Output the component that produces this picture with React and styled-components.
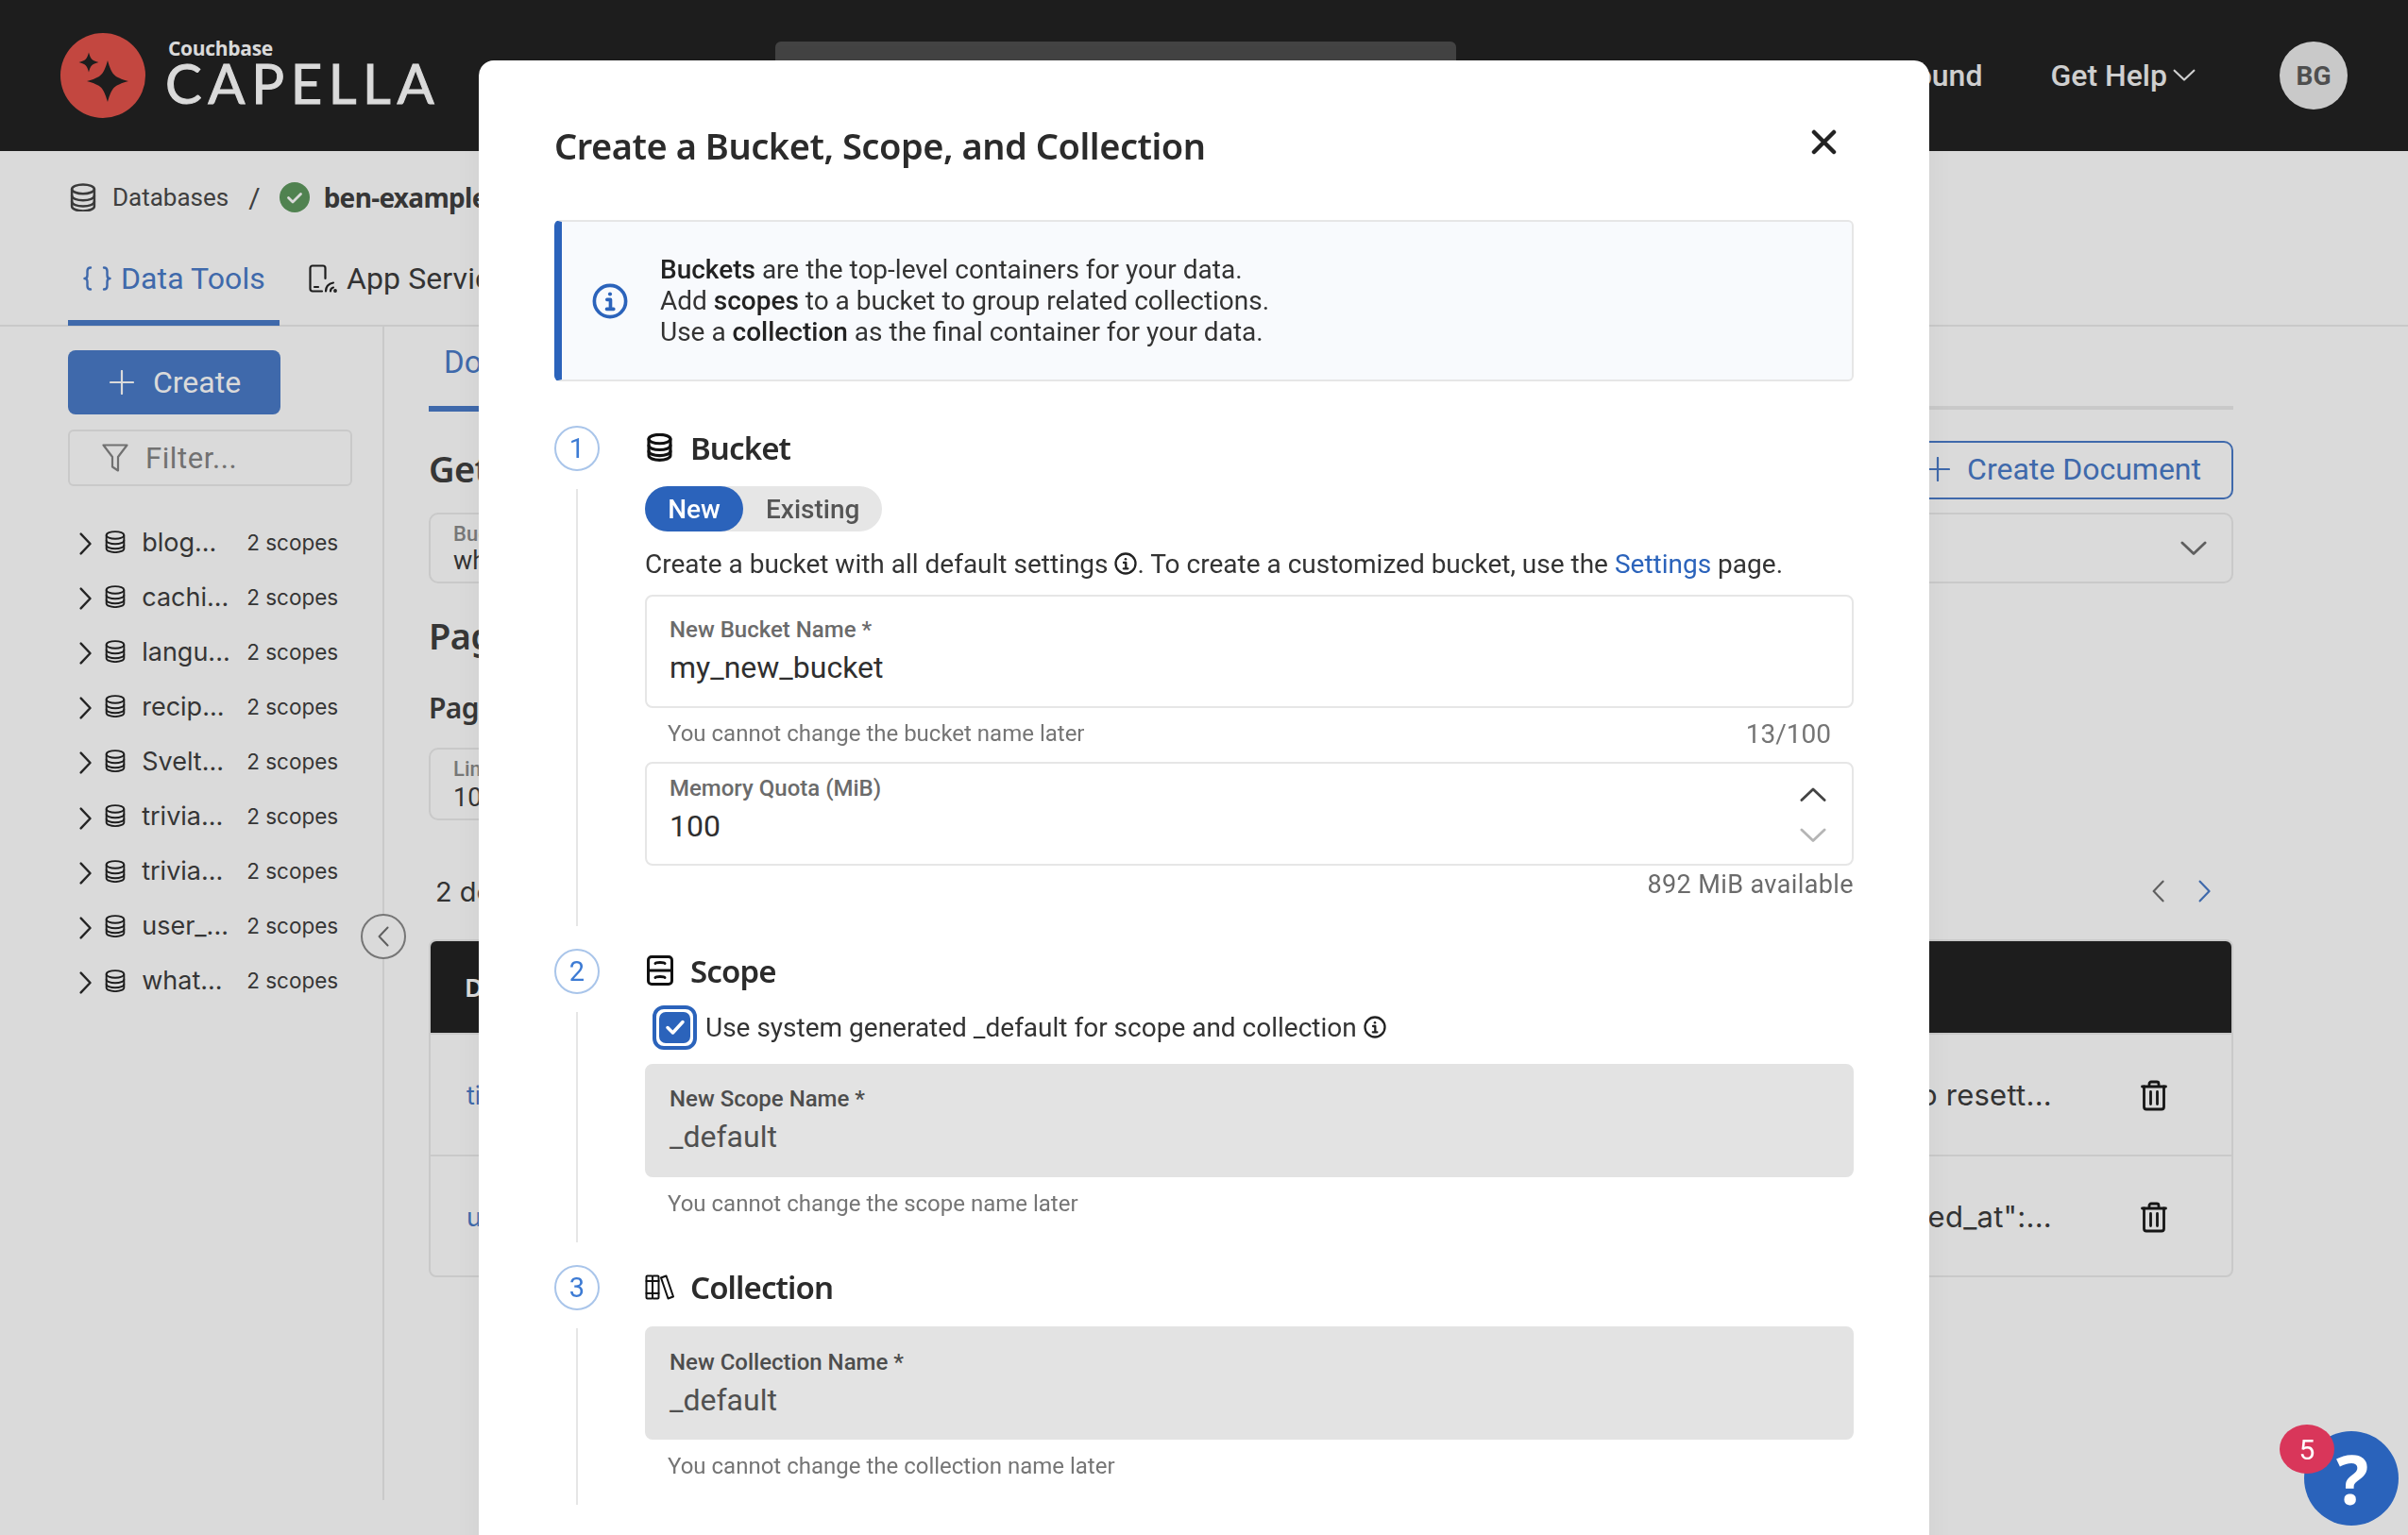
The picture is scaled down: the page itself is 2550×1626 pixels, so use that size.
import React from "react";
import styled, { createGlobalStyle } from "styled-components";

const Global = createGlobalStyle`
  html, body { margin: 0; padding: 0; width: 2550px; height: 1626px; overflow: hidden; background: #fff; }
  * { box-sizing: border-box; }
  body { font-family: Roboto, "Liberation Sans", sans-serif; color: #3c3c3c; }
`;

const Page = styled.div`width: 2550px; height: 1626px; display: flex; flex-direction: column; overflow: hidden;`;
const Header = styled.header`height: 160px; background: #232323; display: flex; align-items: center; padding: 0 64px 0 64px; flex: none;`;
const LogoWrap = styled.div`display: flex; align-items: center; gap: 21px; width: 396px; flex: none;`;
const LogoText = styled.div`display: flex; flex-direction: column; margin-top: -10px;`;
const LogoSmall = styled.span`font: 700 21px/22px "Open Sans", sans-serif; color: #fff; margin-left: 3px; letter-spacing: -.3px;`;
const LogoBig = styled.span`font: 400 58px/44px Lato, sans-serif; color: #fff; letter-spacing: 6.600px; margin-top: 4px; -webkit-text-stroke: 1px #fff; white-space: nowrap;`;
const Search = styled.div`width: 721px; height: 72px; margin-left: 361px; background: #4f4f4f; border-radius: 6px; flex: none;`;
const Nav = styled.nav`margin-left: auto; display: flex; align-items: center; color: #f2f2f2; font-size: 32px; font-weight: 500;`;
const NavItem = styled.span`display: flex; align-items: center; gap: 6px; margin-right: ${p => p.$mr}px;`;
const Avatar = styled.div`width: 72px; height: 72px; border-radius: 50%; background: #ebebeb; color: #5c5c5c; font: 700 28px Roboto, sans-serif; display: flex; align-items: center; justify-content: center;`;

const Crumbs = styled.div`height: 100px; flex: none; display: flex; align-items: center; padding: 0 0 2px 74px; font-size: 26px; color: #4a4a4a;`;
const CrumbLabel = styled.span`margin-left: 17px;`;
const Slash = styled.span`margin: 0 20px 0 21px; font-size: 30px;`;
const CrumbBold = styled.span`margin-left: 15px; font: 700 28px "Noto Sans", sans-serif; color: #404040; letter-spacing: -.7px; white-space: nowrap;`;
const Tabs = styled.div`height: 86px; flex: none; display: flex; padding-left: 72px; border-bottom: 2px solid #ebebeb;`;
const Tab = styled.div`height: 85px; width: ${p => p.$w}px; padding: 0 0 ${p => p.$on ? 10 : 16}px 16px; display: flex; align-items: center; gap: ${p => p.$gap}px; font-size: 32px; letter-spacing: .1px; color: ${p => p.$on ? "#4a7bc8" : "#3c3c3c"}; border-bottom: ${p => p.$on ? "6px solid #4a7bc8" : "0"}; margin-right: ${p => p.$mr || 0}px;`;

const Body = styled.div`display: flex; flex: 1; min-height: 0;`;
const Sidebar = styled.aside`position: relative; width: 407px; height: 1243px; flex: none; border-right: 2px solid #ebebeb; padding: 25px 0 0 72px;`;
const CreateBtn = styled.div`width: 225px; height: 68px; background: #4a7bc8; border-radius: 8px; display: flex; align-items: center; justify-content: center; gap: 20px; color: #fff; font-size: 32px; padding-left: 2px;`;
const FilterBox = styled.div`width: 301px; height: 60px; margin-top: 16px; border: 2px solid #ebebeb; border-radius: 6px; display: flex; align-items: center; padding-left: 34px; gap: 18px; color: #858585; font-size: 31px; letter-spacing: .6px;`;
const Tree = styled.div`margin-top: 30px; padding-left: 12px;`;
const TreeRow = styled.div`height: 58.1px; display: flex; align-items: center; color: #3f3f3f; font: 400 27px Inter, sans-serif;`;
const TreeName = styled.span`margin-left: 17px; width: 111px; flex: none;`;
const TreeMeta = styled.span`font-size: 22.500px;`;
const Chev = styled.span`display: inline-flex; margin-right: 14px; margin-top: 4px;`;
const Collapse = styled.div`position: absolute; top: 622px; right: -25px; width: 48px; height: 48px; border-radius: 50%; border: 2px solid #8a8a8a; background: #fff; display: flex; align-items: center; justify-content: center;`;

const Main = styled.main`flex: 1; padding: 0 185px 0 47px; min-width: 0;`;
const SubTabs = styled.div`height: 88px; border-bottom: 4px solid #ebebeb; display: flex;`;
const SubTab = styled.div`width: 300px; height: 90px; padding: 0 0 10px 16px; display: flex; align-items: center; color: #4a7bc8; font-size: 33px; border-bottom: 6px solid #4a7bc8;`;
const TopRow = styled.div`margin-top: 33px; height: 62px; display: flex; justify-content: space-between; align-items: center;`;
const H2 = styled.h2`margin: 0 0 4px; font: 600 38px "Noto Sans", sans-serif; color: #404040; letter-spacing: -.6px;`;
const OutlineBtn = styled.div`width: 344px; height: 62px; border: 2px solid #4a7bc8; border-radius: 10px; display: flex; align-items: center; justify-content: flex-end; gap: 18px; padding: 0 32px 2px 0; color: #4a7bc8; font-size: 32px;`;
const SelectBox = styled.div`position: relative; height: ${p => p.$h}px; width: ${p => p.$w || "100%"}; margin-top: ${p => p.$mt}px; border: 2px solid #ebebeb; border-radius: 10px; padding: 8px 0 0 24px; display: flex; flex-direction: column; justify-content: space-between;`;
const SelLabel = styled.span`font: 500 22px Roboto, sans-serif; color: #8c8c8c;`;
const SelValue = styled.span`font-size: 27px; color: #3c3c3c; padding-bottom: 6px;`;
const SelChev = styled.span`position: absolute; right: 26px; top: 28px; display: flex;`;
const H3 = styled.h3`margin: ${p => p.$mt}px 0 0; font: 600 ${p => p.$s}px "Noto Sans", sans-serif; color: #404040; letter-spacing: -.6px;`;
const CountRow = styled.div`margin-top: 53px; padding-left: 7px; display: flex; justify-content: space-between; align-items: center; height: 44px; font: 400 29px Inter, sans-serif; color: #3c3c3c;`;
const Pager = styled.div`display: flex; gap: 36px; padding-right: 24px;`;
const DocTable = styled.div`margin-top: 29px; border: 2px solid #ebebeb; border-radius: 8px; overflow: hidden;`;
const THead = styled.div`height: 97px; background: #232323; color: #fff; font: 600 27px "Noto Sans", sans-serif; display: flex; align-items: center; padding-left: 36px;`;
const TRow = styled.div`height: ${p => p.$h}px; display: flex; align-items: center; padding: 2px 68px 0 38px; border-top: 2px solid #ebebeb;`;
const TId = styled.span`color: #4a7bc8; font: 400 27px Inter, sans-serif;`;
const TValue = styled.span`margin-left: auto; font: 400 31px Inter, sans-serif; color: #3c3c3c; letter-spacing: .25px; white-space: nowrap; margin-bottom: 2px;`;
const TrashWrap = styled.span`margin-left: 94px; display: flex;`;

const Overlay = styled.div`position: fixed; inset: 0; background: rgba(0,0,0,.145); display: flex; justify-content: center; padding-top: 64px;`;
const Modal = styled.section`width: 1536px; height: 1700px; background: #fff; border-radius: 16px 16px 0 0; padding: 0 80px; box-shadow: 0 0 40px rgba(0,0,0,.05); flex: none; position: relative;`;
const TitleRow = styled.div`height: 169px; padding-top: 59px; display: flex; justify-content: space-between; align-items: flex-start;`;
const Title = styled.h1`margin: 0; font: 600 38px/62px "Noto Sans", sans-serif; color: #2b2b2b; letter-spacing: -.47px;`;
const CloseBtn = styled.span`display: flex; margin: 14px 18px 0 0;`;
const InfoBox = styled.div`height: 171px; background: #f8fafd; border: 2px solid #e6e6e6; border-left: 8px solid #2b63bb; border-radius: 6px; display: flex; align-items: center; padding-left: 32px; gap: 34px; font-size: 28px; line-height: 33px; color: #333;`;
const B = styled.b`font-weight: 500; color: #222;`;
const Steps = styled.div`margin-top: 47px; display: flex; flex-direction: column; gap: 24px;`;
const Step = styled.div`display: grid; grid-template-columns: 48px 1fr; column-gap: 48px; padding-bottom: ${p => p.$pb}px;`;
const Rail = styled.div`display: flex; flex-direction: column; align-items: center; margin-bottom: -${p => p.$pb}px;`;
const Circle = styled.div`width: 48px; height: 48px; border-radius: 50%; border: 2px solid #a9c5ea; color: #3d7bd4; font-size: 29px; display: flex; align-items: center; justify-content: center; flex: none;`;
const RailLine = styled.div`flex: 1; width: 2px; background: #e6e6e6; margin-top: 19px;`;
const StepBody = styled.div`display: flex; flex-direction: column; min-width: 0;`;
const StepHead = styled.div`height: 48px; display: flex; align-items: center; gap: ${p => p.$gap}px; font: 600 33px "Noto Sans", sans-serif; color: #2b2b2b; letter-spacing: -.9px; padding: 0 0 2px ${p => p.$pl || 0}px;`;
const Toggle = styled.div`margin-top: 16px; width: 251px; height: 48px; background: #e6e6e6; border-radius: 24px; display: flex; align-items: center; font-size: 28px; font-weight: 500;`;
const ToggleOn = styled.span`width: 104px; height: 48px; border-radius: 24px; background: #2b63bb; color: #fff; display: flex; align-items: center; justify-content: center;`;
const ToggleOff = styled.span`margin-left: 24px; color: #555;`;
const Desc = styled.div`margin-top: 16px; height: 36px; display: flex; align-items: center; white-space: pre; font-size: 28px; color: #333;`;
const A = styled.span`color: #2b63bb;`;
const Field = styled.div`position: relative; margin-top: ${p => p.$mt}px; height: ${p => p.$h}px; border-radius: 8px; padding: ${p => p.$pt}px 24px 0 24px; background: ${p => p.$off ? "#e3e3e3" : "#fff"}; border: 2px solid ${p => p.$off ? "#e3e3e3" : "#e6e6e6"}; display: flex; flex-direction: column;`;
const FieldLabel = styled.label`font: 500 24px/28px Roboto, sans-serif; color: ${p => p.$off ? "#4d4d4d" : "#6b6b6b"};`;
const FieldValue = styled.div`font-size: 32px; line-height: 40px; margin-top: 6px; color: ${p => p.$off ? "#505050" : "#2f2f2f"};`;
const Spin = styled.div`position: absolute; right: 27px; top: 25px; display: flex; flex-direction: column; gap: 28px;`;
const Helper = styled.div`margin-top: ${p => p.$mt}px; height: 30px; padding: 0 24px; display: flex; justify-content: space-between; align-items: center; font-size: 24px; color: #757575;`;
const Count = styled.span`font-size: 28px;`;
const Avail = styled.div`margin-top: 5px; height: 30px; text-align: right; font-size: 27px; line-height: 30px; color: #6b6b6b; letter-spacing: .4px;`;
const CheckRow = styled.div`margin-top: 11px; height: 48px; display: flex; align-items: center; font-size: 28px; color: #333; padding-left: 8px; white-space: pre;`;
const CheckRing = styled.span`width: 47px; height: 47px; border: 4px solid #2b63bb; border-radius: 12px; padding: 3px; margin-right: 9px; display: flex; flex: none;`;
const CheckBox = styled.span`flex: 1; background: #2b63bb; border-radius: 7px; display: flex; align-items: center; justify-content: center;`;

const Fab = styled.div`position: fixed; left: 2440px; top: 1516px; width: 100px; height: 100px; border-radius: 50%; background: #2a63bb; color: #fff; font: 700 72px "Noto Sans", sans-serif; display: flex; align-items: center; justify-content: center; padding: 0 0 0 2px;`;
const Badge = styled.div`position: absolute; left: -26px; top: -7px; width: 58px; height: 52px; border-radius: 50%; background: #d9365a; color: #fff; font: 400 30px Roboto, sans-serif; display: flex; align-items: center; justify-content: center;`;

const Ico = ({ w, h = w, vb, color = "currentColor", sw = 2, children }) => (
  <svg width={w} height={h} viewBox={vb} fill="none" stroke={color} strokeWidth={sw} strokeLinecap="round" strokeLinejoin="round" style={{ flex: "none", display: "block" }}>{children}</svg>
);
const Db = ({ w, color = "#2b2b2b", sw = 2 }) => (
  <Ico w={w} h={w * 1.1} vb="0 0 20 22" color={color} sw={sw}>
    <ellipse cx="10" cy="4.5" rx="8.5" ry="3.5" />
    <path d="M1.5 4.5v13c0 2 3.8 3.5 8.5 3.5s8.5-1.500 8.500-3.500v-13" />
    <path d="M1.500 9.500c0 2 3.800 3.500 8.500 3.500s8.500-1.500 8.500-3.500" />
    <path d="M1.500 14c0 2 3.800 3.500 8.500 3.500s8.500-1.500 8.500-3.500" />
  </Ico>
);
const ScopeIco = () => (
  <Ico w={28} h={32} vb="0 0 28 32" color="#111" sw={3}>
    <rect x="1.500" y="1.500" width="25" height="29" rx="3.500" />
    <path d="M1.500 16h25" />
    <path d="M9 8.500c1-1.500 9-1.500 10 0" />
    <path d="M9 23.500c1-1.500 9-1.500 10 0" />
  </Ico>
);
const BooksIco = () => (
  <Ico w={31} h={27} vb="0 0 31 27" color="#111" sw={2}>
    <rect x="1.500" y="1.500" width="6.500" height="24" rx="1" />
    <rect x="8" y="1.500" width="6.500" height="24" rx="1" />
    <path d="M1.500 7h13M1.500 20h13" />
    <path d="M17 3.500l5.500-2 7.500 22-5.500 2z" />
  </Ico>
);
const InfoIco = ({ s, color }) => (
  <Ico w={s} vb="0 0 24 24" color={color} sw={2.300}>
    <circle cx="12" cy="12" r="10.500" />
    <circle cx="12" cy="7.300" r="1.300" fill={color} stroke="none" />
    <path d="M10 11h2.300v6M9.800 17.300h4.600" />
  </Ico>
);
const ChevD = ({ w = 24, color = "#f2f2f2", sw = 2 }) => (
  <Ico w={w} h={w * .55} vb="0 0 22 12" color={color} sw={sw}><path d="M1.500 1.500L11 10.500 20.500 1.500" /></Ico>
);
const ChevU = ({ w = 24, color, sw = 2 }) => (
  <Ico w={w} h={w * .55} vb="0 0 22 12" color={color} sw={sw}><path d="M1.500 10.500L11 1.500 20.500 10.500" /></Ico>
);
const ChevR = ({ h = 22, color = "#2b2b2b", sw = 2 }) => (
  <Ico w={h * .55} h={h} vb="0 0 12 22" color={color} sw={sw}><path d="M1.500 1.500L10.500 11 1.500 20.500" /></Ico>
);
const ChevL = ({ h = 22, color = "#2b2b2b", sw = 2 }) => (
  <Ico w={h * .55} h={h} vb="0 0 12 22" color={color} sw={sw}><path d="M10.500 1.500L1.500 11 10.500 20.500" /></Ico>
);
const Plus = ({ s, color }) => (
  <Ico w={s} vb="0 0 26 26" color={color} sw={2.200}><path d="M13 1v24M1 13h24" /></Ico>
);
const Trash = () => (
  <Ico w={28} h={33} vb="0 0 28 32" color="#1a1a1a" sw={2.800}>
    <path d="M1.500 6.500h25M9 6.500V3.500c0-1 .8-2 2-2h6c1.200 0 2 1 2 2v3" />
    <path d="M3.500 6.500V28c0 1.500 1 2.500 2.500 2.500h16c1.500 0 2.500-1 2.500-2.500V6.500" />
    <path d="M10.500 12v13M17.500 12v13" />
  </Ico>
);
const Star = ({ cx, cy, r }) => (
  <path fill="#232323" d={`M${cx} ${cy - r}C${cx + r * .2} ${cy - r * .3} ${cx + r * .3} ${cy - r * .2} ${cx + r} ${cy}C${cx + r * .3} ${cy + r * .2} ${cx + r * .2} ${cy + r * .3} ${cx} ${cy + r}C${cx - r * .2} ${cy + r * .3} ${cx - r * .3} ${cy + r * .2} ${cx - r} ${cy}C${cx - r * .3} ${cy - r * .2} ${cx - r * .2} ${cy - r * .3} ${cx} ${cy - r}Z`} />
);

const buckets = ["blog...", "cachi...", "langu...", "recip...", "Svelt...", "trivia...", "trivia...", "user_...", "what..."];

export default function App() {
  return (
    <Page>
      <Global />
      <Header>
        <LogoWrap>
          <svg width="90" height="90" viewBox="0 0 90 90" style={{ flex: "none" }}>
            <circle cx="45" cy="45" r="45" fill="#e5544b" />
            <Star cx={50} cy={51} r={22} />
            <Star cx={30} cy={31} r={10.5} />
          </svg>
          <LogoText>
            <LogoSmall>Couchbase</LogoSmall>
            <LogoBig>CAPELLA</LogoBig>
          </LogoText>
        </LogoWrap>
        <Search />
        <Nav>
          <NavItem $mr={72}>Playground</NavItem>
          <NavItem $mr={89}>Get Help <ChevD w={24} /></NavItem>
          <Avatar>BG</Avatar>
        </Nav>
      </Header>
      <Crumbs>
        <Db w={28} color="#444" sw={1.800} />
        <CrumbLabel>Databases</CrumbLabel>
        <Slash>/</Slash>
        <svg width="32" height="32" viewBox="0 0 32 32" style={{ flex: "none" }}>
          <circle cx="16" cy="16" r="16" fill="#5e985e" />
          <path d="M9.500 16.500l4.500 4.500 8.500-8.500" fill="none" stroke="#fff" strokeWidth="2.800" strokeLinecap="round" strokeLinejoin="round" />
        </svg>
        <CrumbBold>ben-example-cluster</CrumbBold>
      </Crumbs>
      <Tabs>
        <Tab $on $w={224} $gap={10} $mr={15}>
          <Ico w={30} h={26} vb="0 0 30 26" sw={2.400}>
            <path d="M8 1.500C5 1.500 4.500 3 4.500 5v4.500c0 2-1 3.500-3 3.500 2 0 3 1.500 3 3.500V21c0 2 .5 3.500 3.500 3.500" />
            <path d="M22 1.500c3 0 3.500 1.500 3.500 3.500v4.500c0 2 1 3.500 3 3.500-2 0-3 1.500-3 3.500V21c0 2-.5 3.500-3.500 3.500" />
          </Ico>
          Data Tools
        </Tab>
        <Tab $w={380} $gap={10}>
          <Ico w={30} h={30} vb="0 0 30 30" color="#222" sw={2.200}>
            <path d="M14 28.500H4c-1.500 0-2.500-1-2.500-2.500V4C1.500 2.500 2.500 1.500 4 1.500h11c1.500 0 2.500 1 2.500 2.500v11" />
            <path d="M6 24h4" />
            <path d="M18 28.500c0-5 3-8 8-9M23 28.500c0-2 1-3.500 3-4" />
            <circle cx="28" cy="28" r=".8" />
          </Ico>
          App Services
        </Tab>
      </Tabs>
      <Body>
        <Sidebar>
          <CreateBtn><Plus s={26} color="#fff" />Create</CreateBtn>
          <FilterBox>
            <Ico w={28} h={30} vb="0 0 28 30" color="#858585" sw={2.200}>
              <path d="M1.500 1.500h25L17 14v14.500l-6-4V14z" />
            </Ico>
            Filter...
          </FilterBox>
          <Tree>
            {buckets.map((n, i) => (
              <TreeRow key={i}>
                <Chev><ChevR h={24} sw={2.200} /></Chev>
                <Db w={22} color="#222" sw={1.700} />
                <TreeName>{n}</TreeName>
                <TreeMeta>2 scopes</TreeMeta>
              </TreeRow>
            ))}
          </Tree>
          <Collapse><ChevL h={22} color="#707070" /></Collapse>
        </Sidebar>
        <Main>
          <SubTabs><SubTab>Documents</SubTab></SubTabs>
          <TopRow>
            <H2>Get Documents</H2>
            <OutlineBtn><Plus s={26} color="#4a7bc8" />Create Document</OutlineBtn>
          </TopRow>
          <SelectBox $h={75} $mt={14}>
            <SelLabel>Bucket</SelLabel>
            <SelValue>what-if</SelValue>
            <SelChev><ChevD w={28} color="#707070" sw={2.200} /></SelChev>
          </SelectBox>
          <H3 $mt={29} $s={38}>Page Options</H3>
          <H3 $mt={30} $s={30}>Page</H3>
          <SelectBox $h={77} $mt={22} $w="300px">
            <SelLabel>Limit</SelLabel>
            <SelValue>10</SelValue>
          </SelectBox>
          <CountRow>
            2 documents
            <Pager>
              <ChevL h={24} color="#707070" />
              <ChevR h={24} color="#4a7bc8" />
            </Pager>
          </CountRow>
          <DocTable>
            <THead>Document ID</THead>
            <TRow $h={129}>
              <TId>ticket</TId>
              <TValue>o resett...</TValue>
              <TrashWrap><Trash /></TrashWrap>
            </TRow>
            <TRow $h={128}>
              <TId>user</TId>
              <TValue>ed_at":...</TValue>
              <TrashWrap><Trash /></TrashWrap>
            </TRow>
          </DocTable>
        </Main>
      </Body>

      <Overlay>
        <Modal>
          <TitleRow>
            <Title>Create a Bucket, Scope, and Collection</Title>
            <CloseBtn>
              <Ico w={27} vb="0 0 27 27" color="#222" sw={4.500}><path d="M3 3l21 21M24 3L3 24" /></Ico>
            </CloseBtn>
          </TitleRow>
          <InfoBox>
            <InfoIco s={38} color="#2b63bb" />
            <div>
              <B>Buckets</B> are the top-level containers for your data.<br />
              Add <B>scopes</B> to a bucket to group related collections.<br />
              Use a <B>collection</B> as the final container for your data.
            </div>
          </InfoBox>
          <Steps>
            <Step $pb={29}>
              <Rail $pb={29}><Circle>1</Circle><RailLine /></Rail>
              <StepBody>
                <StepHead $gap={19} $pl={2}><Db w={27} color="#111" sw={2.300} />Bucket</StepHead>
                <Toggle><ToggleOn>New</ToggleOn><ToggleOff>Existing</ToggleOff></Toggle>
                <Desc>Create a bucket with all default settings <InfoIco s={24} color="#222" />. To create a customized bucket, use the <A>Settings</A> page.</Desc>
                <Field $mt={15} $h={120} $pt={21}>
                  <FieldLabel>New Bucket Name *</FieldLabel>
                  <FieldValue>my_new_bucket</FieldValue>
                </Field>
                <Helper $mt={12}>You cannot change the bucket name later<Count>13/100</Count></Helper>
                <Field $mt={15} $h={110} $pt={12}>
                  <FieldLabel>Memory Quota (MiB)</FieldLabel>
                  <FieldValue>100</FieldValue>
                  <Spin>
                    <ChevU w={28} color="#444" sw={2.200} />
                    <ChevD w={28} color="#b5b5b5" sw={2.200} />
                  </Spin>
                </Field>
                <Avail>892 MiB available</Avail>
              </StepBody>
            </Step>
            <Step $pb={26}>
              <Rail $pb={26}><Circle>2</Circle><RailLine /></Rail>
              <StepBody>
                <StepHead $gap={18} $pl={2}><ScopeIco />Scope</StepHead>
                <CheckRow>
                  <CheckRing>
                    <CheckBox>
                      <Ico w={22} h={18} vb="0 0 22 18" color="#fff" sw={3.500}><path d="M3 9.500l5.500 5.500L19 3.500" /></Ico>
                    </CheckBox>
                  </CheckRing>
                  Use system generated _default for scope and collection <InfoIco s={24} color="#222" />
                </CheckRow>
                <Field $off $mt={15} $h={120} $pt={21}>
                  <FieldLabel $off>New Scope Name *</FieldLabel>
                  <FieldValue $off>_default</FieldValue>
                </Field>
                <Helper $mt={13}>You cannot change the scope name later</Helper>
              </StepBody>
            </Step>
            <Step $pb={26}>
              <Rail $pb={26}><Circle>3</Circle><RailLine /></Rail>
              <StepBody>
                <StepHead $gap={17}><BooksIco />Collection</StepHead>
                <Field $off $mt={17} $h={120} $pt={22}>
                  <FieldLabel $off>New Collection Name *</FieldLabel>
                  <FieldValue $off>_default</FieldValue>
                </Field>
                <Helper $mt={13}>You cannot change the collection name later</Helper>
              </StepBody>
            </Step>
          </Steps>
        </Modal>
      </Overlay>
      <Fab>?<Badge>5</Badge></Fab>
    </Page>
  );
}
